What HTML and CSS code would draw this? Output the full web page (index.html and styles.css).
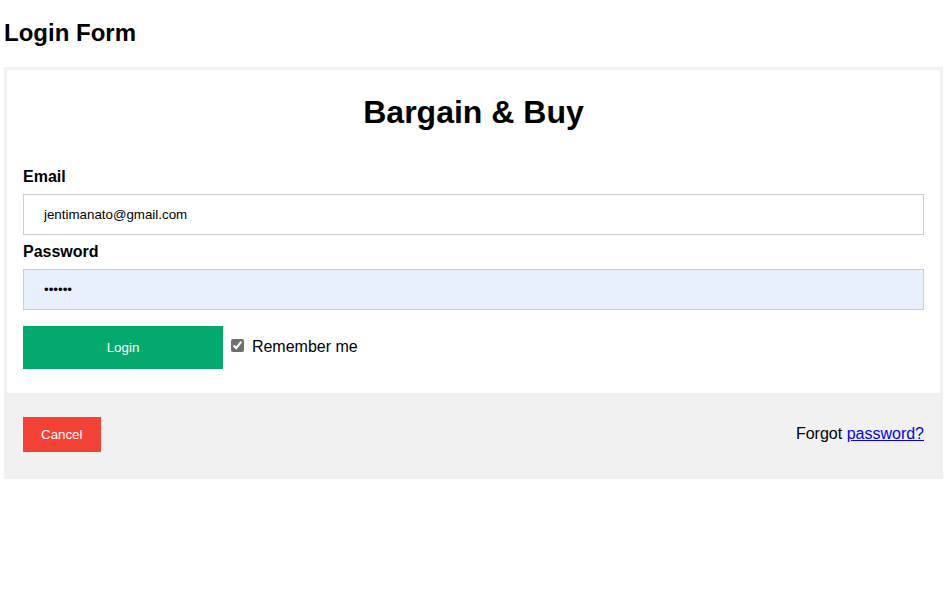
FILE: index.html
```html
<!DOCTYPE html>
<html>
<head>
<meta charset="utf-8">
<title>Login Form</title>
<link rel="stylesheet" href="styles.css">
</head>
<body>
<h2 class="page-title">Login Form</h2>
<form class="login-form" onsubmit="return false">
  <div class="brand">
    <h1 class="brand-title">Bargain &amp; Buy</h1>
  </div>
  <div class="container">
    <label class="field-label" for="email"><b>Email</b></label>
    <input class="text-input" type="text" id="email" value="jentimanato@gmail.com">
    <label class="field-label" for="psw"><b>Password</b></label>
    <input class="text-input autofill" type="password" id="psw" value="secret">
    <button class="login-btn" type="submit">Login</button>
    <label class="remember">
      <input class="remember-box" type="checkbox" checked> Remember me
    </label>
  </div>
  <div class="container footer">
    <button class="cancel-btn" type="button">Cancel</button>
    <span class="psw">Forgot <a href="#">password?</a></span>
  </div>
</form>
</body>
</html>
```
FILE: styles.css
```css
body {
  margin: 8px 4px;
  font-family: "Liberation Sans", Arial, sans-serif;
  background: #fff;
  color: #000;
}

.page-title {
  font-size: 24px;
  margin: 11px 0 20px;
}

.login-form {
  border: 3px solid #f1f1f1;
}

.brand {
  text-align: center;
}

.brand-title {
  font-size: 32px;
  margin: 24px 0 21px;
}

.container {
  padding: 16px;
}

.field-label {
  font-size: 16px;
}

.text-input {
  width: 100%;
  padding: 12px 20px;
  margin: 8px 0;
  display: inline-block;
  border: 1px solid #ccc;
  box-sizing: border-box;
  font-family: "Liberation Sans", Arial, sans-serif;
  font-size: 13.33px;
  color: #000;
  background: #fff;
  outline: none;
}

.text-input.autofill {
  background: #e8f0fe;
}

.login-btn {
  background-color: #04aa6d;
  color: #fff;
  padding: 14px 20px;
  margin: 8px 0;
  border: none;
  width: 200px;
  font-family: "Liberation Sans", Arial, sans-serif;
  font-size: 13.33px;
  cursor: pointer;
}

.remember {
  font-size: 16px;
}

.remember-box {
  accent-color: #6f6f6f;
  margin: 3px 3px 3px 4px;
}

.footer {
  background-color: #f1f1f1;
}

.cancel-btn {
  background-color: #f44336;
  color: #fff;
  padding: 10px 18px;
  margin: 8px 0;
  border: none;
  font-family: "Liberation Sans", Arial, sans-serif;
  font-size: 13.33px;
  cursor: pointer;
}

.psw {
  float: right;
  padding-top: 16px;
  font-size: 16px;
}

.psw a {
  color: #0000ee;
}
```
